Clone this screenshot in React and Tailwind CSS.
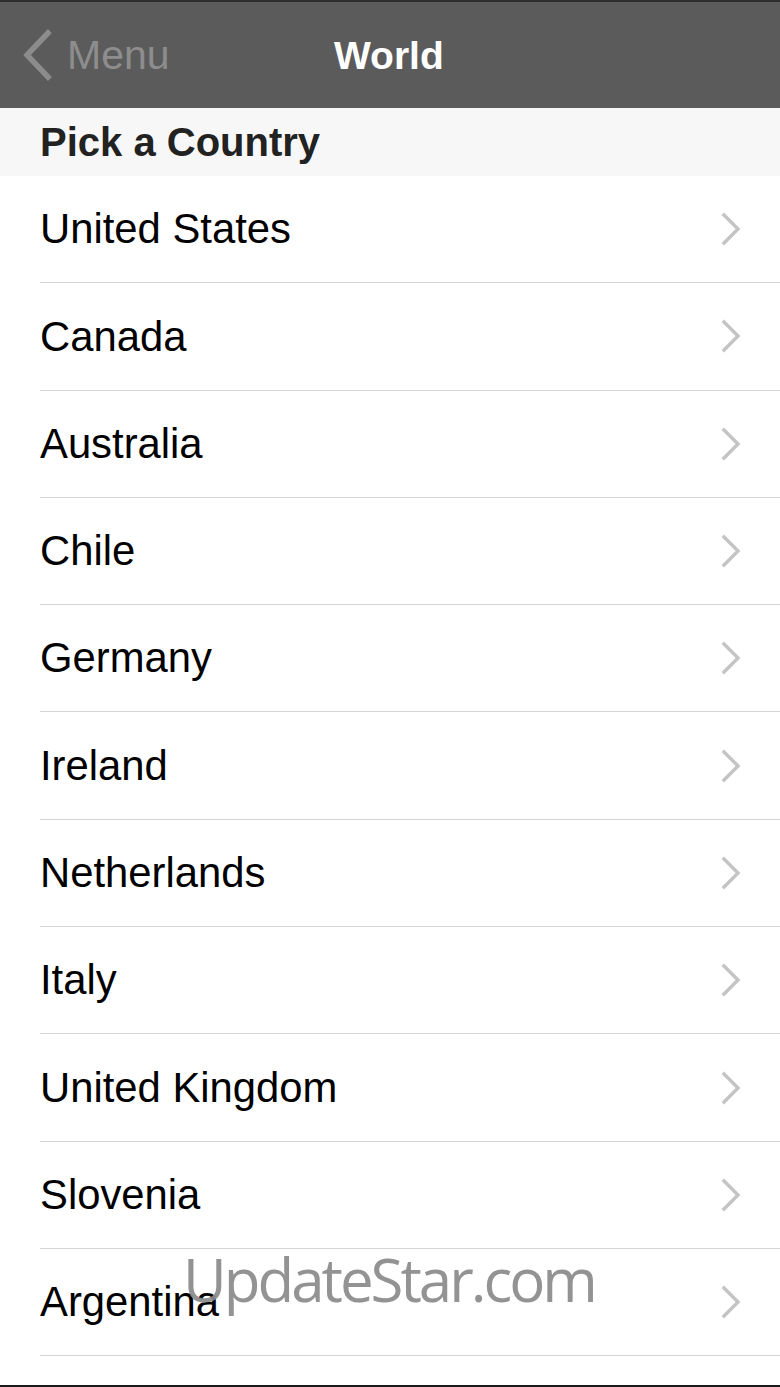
import React from "react";

const countries = [
  "United States",
  "Canada",
  "Australia",
  "Chile",
  "Germany",
  "Ireland",
  "Netherlands",
  "Italy",
  "United Kingdom",
  "Slovenia",
  "Argentina",
];

function Chevron() {
  return (
    <svg width="22" height="34" viewBox="0 0 22 34" className="shrink-0">
      <path d="M3 3 L17 17 L3 31" fill="none" stroke="#c4c4c4" strokeWidth="3.4" strokeLinecap="square" />
    </svg>
  );
}

export default function App() {
  return (
    <div
      className="relative w-[780px] h-[1387px] bg-white overflow-hidden"
      style={{ fontFamily: '"Liberation Sans", Arial, sans-serif' }}
    >
      <div className="h-[2px] bg-[#2e2e2e]" />
      <div className="relative h-[106px] bg-[#5b5b5b] flex items-center">
        <div className="flex items-center pl-[20px] gap-[14px]">
          <svg width="33" height="52" viewBox="0 0 33 52">
            <path d="M28 4 L7 26 L28 48" fill="none" stroke="#8c8c8c" strokeWidth="5.5" strokeLinecap="square" />
          </svg>
          <span className="text-[41px] text-[#8d8d8d] leading-none">Menu</span>
        </div>
        <div className="absolute left-[334px] top-0 h-full flex items-center">
          <span className="text-[39px] font-bold text-white leading-none">World</span>
        </div>
      </div>
      <div className="h-[68px] bg-[#f7f7f7] flex items-center pl-[40px]">
        <span className="text-[40px] font-bold text-[#222] leading-none">Pick a Country</span>
      </div>
      <div>
        {countries.map((c) => (
          <div key={c} className="pl-[40px]">
            <div className="h-[107.3px] border-b border-[#d4d4d4] flex items-center justify-between pr-[37px]">
              <span className="text-[41.8px] text-black leading-none">{c}</span>
              <Chevron />
            </div>
          </div>
        ))}
      </div>
      <div className="absolute left-0 right-0 bottom-0 h-[2px] bg-[#1a1a1a]" />
      <div
        className="absolute left-[183px] top-[1249px] text-[60px] text-[#8a8a8a] leading-none tracking-[-3px]"
        style={{ fontFamily: '"Open Sans", "Noto Sans", sans-serif', opacity: 0.92 }}
      >
        UpdateStar.com
      </div>
    </div>
  );
}
